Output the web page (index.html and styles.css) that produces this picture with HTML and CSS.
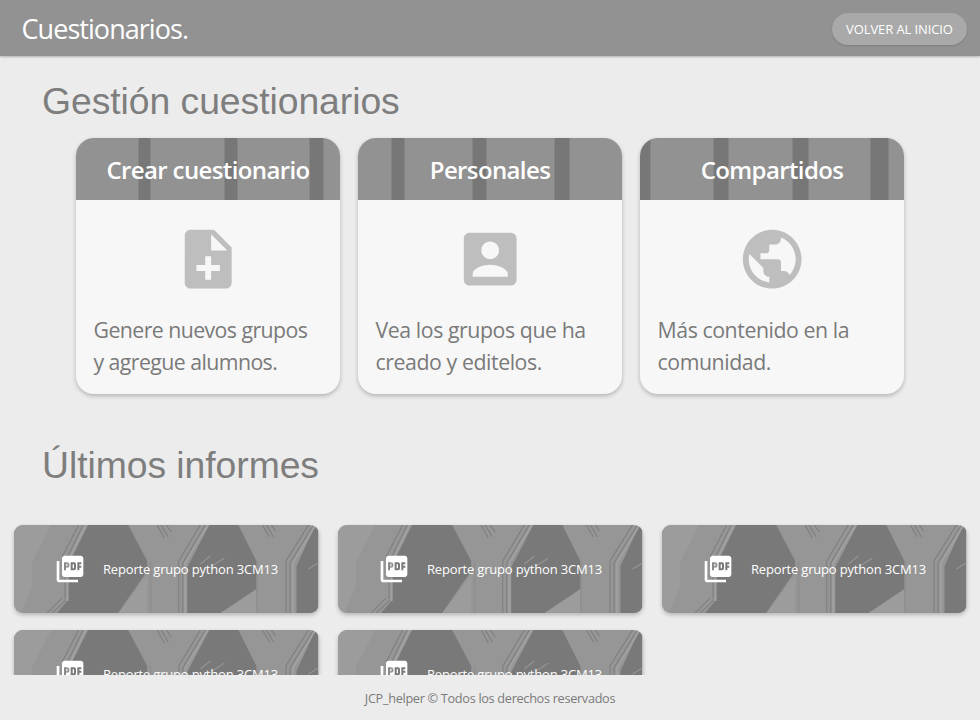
FILE: index.html
```html
<!DOCTYPE html>
<html lang="es">
<head>
<meta charset="utf-8">
<title>Cuestionarios</title>
<link rel="stylesheet" href="styles.css">
</head>
<body>
<svg class="defs" aria-hidden="true">
  <symbol id="pdf" viewBox="0 0 24 24"><path d="M20 2H8c-1.1 0-2 .9-2 2v12c0 1.1.9 2 2 2h12c1.1 0 2-.9 2-2V4c0-1.1-.9-2-2-2zm-8.500 7.500c0 .83-.67 1.500-1.500 1.500H9v2H7.500V7H10c.83 0 1.500.67 1.500 1.500v1zm5 2c0 .83-.67 1.500-1.500 1.500h-2.500V7H15c.83 0 1.500.67 1.500 1.500v3zm4-3H19v1h1.500V11H19v2h-1.500V7h3v1.500zM9 9.500h1v-1H9v1zM4 6H2v14c0 1.100.9 2 2 2h14v-2H4V6zm10 5.500h1v-3h-1v3z"/></symbol>
  <symbol id="art" viewBox="0 0 304 88" preserveAspectRatio="none">
    <rect width="304" height="88" fill="#969696"/>
    <path fill="#9c9c9c" d="M0 0H37L18 37V60L7 88H0zM133 50V88H104zM242 64V88H206z"/>
    <path fill="#797979" d="M74 0H114L133 36V46L104 88H43L54 75V40zM195 0H224L242 36V64L206 88H173V42zM301 0H304V88H282V41z"/>
    <g fill="none" stroke="#7d7d7d" stroke-width="1">
      <path d="M64.500 0 48 32M69 0 51 37V74M48 73 33 88M52 75 38 88"/>
      <path d="M186 0 164.500 36V88M191 0 168.500 38V88M294 0 271.500 36V88M299 0 275.500 38V88"/>
      <path d="M143 0 150 13M147 0 154 12M152 0 157 7M248 0 255 12M252 0 259 12M257 0 261 6"/>
    </g>
    <path d="M136.500 36V88M242.500 36V88" stroke="#8c8c8c"/>
    <g fill="none" stroke="#a0a0a0" stroke-width="2">
      <path d="M71.500 0 53.500 38V76M193.500 0 171 38V88M301 0 278.500 38V88"/>
    </g>
    <path stroke="#959595" d="M186 39 196 31M198 41 210 33M294 44 304 38"/>
  </symbol>
</svg>
<header class="topbar">
  <div class="brand">Cuestionarios.</div>
  <a class="home">VOLVER AL INICIO</a>
</header>
<main class="content">
  <h1 class="heading">Gestión cuestionarios</h1>
  <section class="cards">
    <article class="card">
      <h2 class="card-title stripes-a"><span>Crear cuestionario</span></h2>
      <svg class="card-icon" viewBox="0 0 24 24"><path d="M14 2H6c-1.100 0-1.990.9-1.990 2L4 20c0 1.100.89 2 1.990 2H18c1.100 0 2-.9 2-2V8l-6-6zm2 14h-3v3h-2v-3H8v-2h3v-3h2v3h3v2zm-3-7V3.500L18.500 9H13z"/></svg>
      <p class="desc">Genere nuevos grupos<br>y agregue alumnos.</p>
    </article>
    <article class="card">
      <h2 class="card-title stripes-b"><span>Personales</span></h2>
      <svg class="card-icon" viewBox="0 0 24 24"><path d="M3 5v14c0 1.100.89 2 2 2h14c1.100 0 2-.9 2-2V5c0-1.100-.9-2-2-2H5c-1.110 0-2 .9-2 2zm12 4c0 1.660-1.340 3-3 3s-3-1.340-3-3 1.340-3 3-3 3 1.340 3 3zm-9 8c0-2 4-3.100 6-3.100s6 1.100 6 3.100v1H6v-1z"/></svg>
      <p class="desc wide">Vea los grupos que ha<br>creado y editelos.</p>
    </article>
    <article class="card">
      <h2 class="card-title stripes-c"><span>Compartidos</span></h2>
      <svg class="card-icon" viewBox="0 0 24 24"><path d="M12 2C6.480 2 2 6.480 2 12s4.480 10 10 10 10-4.480 10-10S17.520 2 12 2zm-1 17.930c-3.950-.49-7-3.850-7-7.930 0-.62.08-1.210.21-1.790L9 15v1c0 1.100.9 2 2 2v1.930zm6.900-2.540c-.26-.81-1-1.390-1.900-1.390h-1v-3c0-.55-.45-1-1-1H8v-2h2c.55 0 1-.45 1-1V7h2c1.100 0 2-.9 2-2v-.41c2.930 1.190 5 4.060 5 7.410 0 2.080-.8 3.970-2.100 5.390z"/></svg>
      <p class="desc wide">Más contenido en la<br>comunidad.</p>
    </article>
  </section>
  <h1 class="heading second">Últimos informes</h1>
  <section class="reports">
    <a class="report"><svg class="art"><use href="#art"/></svg><svg class="pdf"><use href="#pdf"/></svg><span>Reporte grupo python 3CM13</span></a>
    <a class="report"><svg class="art"><use href="#art"/></svg><svg class="pdf"><use href="#pdf"/></svg><span>Reporte grupo python 3CM13</span></a>
    <a class="report"><svg class="art"><use href="#art"/></svg><svg class="pdf"><use href="#pdf"/></svg><span>Reporte grupo python 3CM13</span></a>
    <a class="report"><svg class="art"><use href="#art"/></svg><svg class="pdf"><use href="#pdf"/></svg><span>Reporte grupo python 3CM13</span></a>
    <a class="report"><svg class="art"><use href="#art"/></svg><svg class="pdf"><use href="#pdf"/></svg><span>Reporte grupo python 3CM13</span></a>
  </section>
</main>
<footer class="footer">JCP_helper © Todos los derechos reservados</footer>
</body>
</html>
```
FILE: styles.css
```css
* { box-sizing: border-box; }
body {
  margin: 0;
  height: 720px;
  display: flex;
  flex-direction: column;
  overflow: hidden;
  background: #ececec;
  color: #7a7a7a;
  font-family: "Open Sans", "Noto Sans", sans-serif;
}
.defs { position: absolute; width: 0; height: 0; }
.topbar {
  flex: none;
  height: 56px;
  padding: 0 13px 0 21.500px;
  display: flex;
  align-items: center;
  justify-content: space-between;
  background: #929292;
  color: #fff;
  box-shadow: 0 1px 2px rgba(0, 0, 0, .25);
}
.brand { font-size: 27px; line-height: 36px; padding-top: 2px; letter-spacing: -0.95px; white-space: nowrap; }
.home {
  width: 135px;
  height: 32px;
  margin-top: 1px;
  border-radius: 16px;
  background: #a9a9a9;
  box-shadow: 0 1px 2px rgba(0, 0, 0, .14);
  font-size: 13px;
  line-height: 32px;
  text-align: center;
  letter-spacing: -0.1px;
  white-space: nowrap;
}
.content { flex: 1; min-height: 0; overflow: hidden; }
.heading {
  margin: 24px 0 0 42px;
  font: 400 37.330px/43px "Liberation Sans", Arial, sans-serif;
  letter-spacing: -0.06px;
  color: #7e7e7e;
  white-space: nowrap;
}
.cards { display: flex; gap: 18px; padding: 15px 76px 0; }
.card {
  width: 264px;
  height: 256px;
  border-radius: 18px;
  overflow: hidden;
  background: #f7f7f7;
  box-shadow: 0 2px 4px rgba(0, 0, 0, .24);
  display: flex;
  flex-direction: column;
}
.card-title {
  margin: 0;
  height: 62px;
  display: flex;
  align-items: center;
  justify-content: center;
  padding-top: 1px;
  color: #fff;
  font-size: 24px;
  font-weight: 600;
  letter-spacing: -0.62px;
  white-space: nowrap;
}
.stripes-a { background: linear-gradient(90deg, #929292 62px, #777 63px 74px, #929292 75px 148px, #777 149px 161px, #929292 162px 233px, #777 234px 247px, #929292 248px); }
.stripes-b { background: linear-gradient(90deg, #929292 33px, #777 34px 46px, #929292 47px 114px, #777 115px 128px, #929292 129px 196px, #777 197px 211px, #929292 212px); }
.stripes-c { background: linear-gradient(90deg, #777 10px, #929292 11px 73px, #777 74px 88px, #929292 89px 152px, #777 153px 168px, #929292 169px 230px, #777 231px 248px, #929292 249px); }
.card-icon { flex: none; width: 70.400px; height: 70.400px; margin: 24px auto 0; fill: #bebebe; }
.desc {
  margin: 19.600px 0 0 17.500px;
  font-size: 21.300px;
  line-height: 32.500px;
  letter-spacing: -0.57px;
  white-space: nowrap;
}
.wide { letter-spacing: -0.43px; }
.second { margin-top: 49.500px; }
.reports {
  display: grid;
  grid-template-columns: repeat(3, 304.500px);
  gap: 17.500px 19.500px;
  padding: 38px 0 0 14px;
}
.report {
  position: relative;
  height: 88px;
  border-radius: 9px;
  display: flex;
  align-items: center;
  padding-left: 40px;
  color: #fff;
  font-size: 13px;
  letter-spacing: -0.18px;
  box-shadow: 0 2px 4px rgba(0, 0, 0, .24);
  white-space: nowrap;
}
.report span { position: relative; margin-left: 17px; }
.art { position: absolute; inset: 0; width: 100%; height: 100%; border-radius: 9px; }
.pdf { position: relative; width: 32px; height: 32px; fill: #fff; }
.footer {
  flex: none;
  height: 45px;
  line-height: 46px;
  text-align: center;
  font-size: 12.700px;
  letter-spacing: -0.3px;
  background: #ececec;
}
```
